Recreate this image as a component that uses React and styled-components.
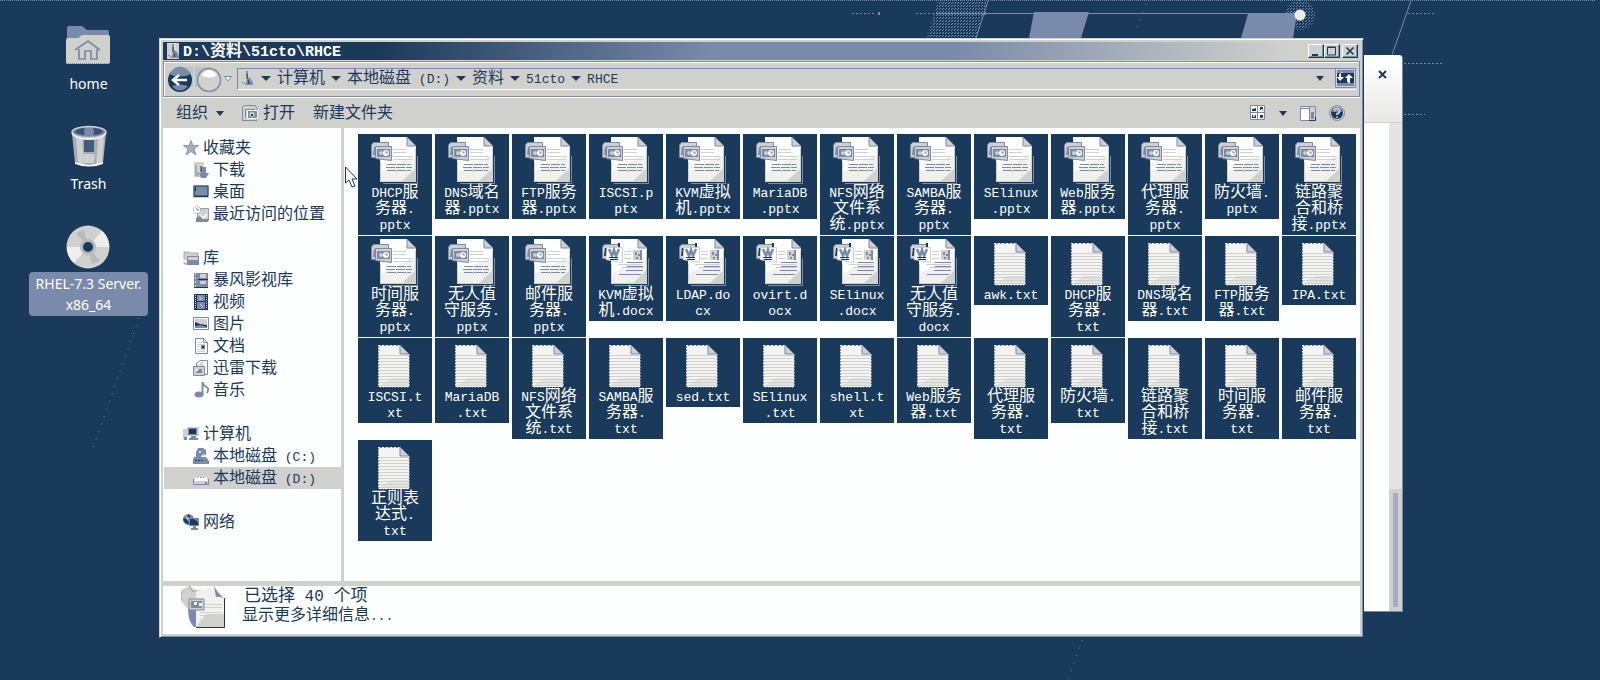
import React from "react";
import styled, { createGlobalStyle } from "styled-components";

const navy = "#1a3a5c";
const blue = "#7a8aaa";
const gray = "#d0d0cc";
const paper = "#fdfefe";

const GlobalStyle = createGlobalStyle`
  * { box-sizing: border-box; }
  body {
    margin: 0;
    background: ${navy};
    color: ${navy};
    font: 16px/16px "DejaVu Sans", "Noto Sans CJK SC", sans-serif;
  }
  button {
    margin: 0;
    padding: 0;
    border: 0;
    background: none;
    color: inherit;
    font: inherit;
    cursor: default;
  }
  a { color: inherit; text-decoration: none; }
  ul { list-style: none; margin: 0; padding: 0; }
  h1 { margin: 0; font-size: inherit; }
  svg { display: block; flex: none; }
`;

/* ---------- text ---------- */

const Latin = styled.span`
  font-family: "Liberation Mono", monospace;
  font-size: ${(p) => p.$size || 13}px;
  line-height: 0;
  white-space: pre;
`;

function Mixed({ text, size }) {
  return text
    .split(/([\x20-\x7e]+)/)
    .filter(Boolean)
    .map((run, i) =>
      /[\x20-\x7e]/.test(run) ? (
        <Latin key={i} $size={size}>{run}</Latin>
      ) : (
        <React.Fragment key={i}>{run}</React.Fragment>
      )
    );
}

/* ---------- desktop ---------- */

const Desktop = styled.div`
  position: relative;
  display: flex;
  align-items: flex-start;
  min-height: 100vh;
  overflow: hidden;
  background: ${navy};
`;

const WallpaperSvg = styled.svg`
  position: absolute;
  inset: 0;
  width: 100%;
  height: 100%;
`;

const Shortcuts = styled.div`
  position: relative;
  display: flex;
  flex-direction: column;
  align-items: center;
  gap: 27px;
  flex: none;
  width: 159px;
  padding: 22px 9px 0 27px;
`;

const Shortcut = styled.button`
  display: flex;
  flex-direction: column;
  align-items: center;
  gap: 2px;
  color: #fff;
  font: 14px/21px "Noto Sans", sans-serif;
`;

const ShortcutName = styled.span`
  padding: 1px 7px;
  border-radius: 4px;
  background: ${(p) => (p.$selected ? blue : "transparent")};
  white-space: pre;
`;

/* ---------- window behind ---------- */

const BackWindow = styled.section`
  position: absolute;
  top: 55px;
  right: 197px;
  display: flex;
  flex-direction: column;
  width: 140px;
  height: 557px;
  border-right: 1px solid ${blue};
  border-bottom: 1px solid ${blue};
  border-radius: 4px 4px 0 0;
  background: ${paper};
`;

const BackHeader = styled.header`
  display: flex;
  justify-content: flex-end;
  align-items: flex-start;
  height: 68px;
  padding: 15px 15px 0 0;
  border-bottom: 1px solid ${gray};
  border-radius: 4px 4px 0 0;
  background: linear-gradient(${paper} 10px, #e8e8e5);
`;

const BackBody = styled.div`
  display: flex;
  flex: 1;
  justify-content: flex-end;
`;

const BackScroll = styled.div`
  display: flex;
  align-items: flex-end;
  width: 13px;
  background: #e4e4e1;
`;

const BackThumb = styled.div`
  width: 13px;
  height: 122px;
  border: 4px solid ${gray};
  background: #a5adbb;
`;

/* ---------- explorer window ---------- */

const Window = styled.main`
  position: relative;
  flex: 1;
  min-width: 0;
  margin: 38px 236px 40px 0;
  padding: 3px;
  border: 1px solid;
  border-color: ${gray} ${navy} ${navy} ${gray};
  background: ${gray};
  box-shadow: inset 1px 1px 0 #fff, inset -1px -1px 0 ${blue};
`;

const TitleBar = styled.header`
  display: flex;
  align-items: center;
  gap: 3px;
  height: 18px;
  padding: 0 2px 0 3px;
  background: linear-gradient(90deg, ${navy} 18%, ${blue} 46%, ${blue} 66%, ${gray} 94%);
  color: #fff;
`;

const Title = styled.h1`
  flex: 1;
  font-weight: 700;
  line-height: 18px;
`;

const CaptionButtons = styled.div`
  display: flex;
`;

const CaptionButton = styled.button`
  display: grid;
  place-items: center;
  width: 16px;
  height: 14px;
  margin-left: ${(p) => (p.$apart ? 2 : 0)}px;
  border: 1px solid;
  border-color: #fff ${navy} ${navy} #fff;
  background: ${gray};
  box-shadow: inset -1px -1px 0 ${blue};
`;

const NavBar = styled.div`
  display: flex;
  align-items: center;
  gap: 2px;
  height: 36px;
  margin-top: 1px;
  padding: 0 2px 0 4px;
  border: 1px solid ${blue};
  box-shadow: inset 1px 1px 0 #fff, 0 1px 0 #fff;
`;

const AddressBar = styled.div`
  display: flex;
  flex: 1;
  align-items: center;
  gap: 6px;
  height: 22px;
  margin-left: 3px;
  padding: 0 0 2px 1px;
  border: 1px solid;
  border-color: ${blue} transparent #fff ${blue};
`;

const Crumb = styled.button`
  display: flex;
  align-items: center;
  white-space: nowrap;
`;

const HistoryArrow = styled.button`
  margin-left: auto;
  padding-right: 5px;
`;

const SvgButton = styled.button`
  display: flex;
`;

const Toolbar = styled.div`
  display: flex;
  align-items: center;
  gap: 18px;
  height: 30px;
  margin-top: 1px;
  padding: 0 15px 0 13px;
`;

const ToolButton = styled.button`
  display: flex;
  align-items: center;
  gap: ${(p) => (p.$menu ? 8 : 5)}px;
`;

const ToolViews = styled.div`
  display: flex;
  align-items: center;
  gap: 13px;
  margin-left: auto;
`;

const Content = styled.div`
  display: flex;
  min-height: 453px;
  background: ${paper};
`;

const Sidebar = styled.nav`
  display: flex;
  flex: none;
  flex-direction: column;
  gap: 22px;
  width: 181px;
  padding-top: 9px;
  border-right: 3px solid ${gray};
`;

const SideLink = styled.a`
  display: flex;
  align-items: center;
  gap: 4px;
  height: 22px;
  margin-left: 1px;
  padding-left: ${(p) => (p.$child ? 29 : 19)}px;
  background: ${(p) => (p.$current ? gray : "transparent")};
`;

const FileGrid = styled.ul`
  display: grid;
  flex: 1;
  grid-template-columns: repeat(auto-fill, 74px);
  align-content: start;
  align-items: start;
  gap: 1px 3px;
  padding: 6px 0 0 14px;
`;

const FileTile = styled.button`
  display: flex;
  flex-direction: column;
  align-items: center;
  width: 74px;
  padding: 2px 0 3px;
  background: ${navy};
  color: #fff;
`;

const FileLine = styled.span`
  display: block;
  height: 16px;
  white-space: nowrap;
`;

const Details = styled.footer`
  display: flex;
  gap: 15px;
  height: 53px;
  padding-left: 18px;
  border-top: 5px solid ${gray};
  background: ${paper};
`;

const DetailsText = styled.div`
  display: flex;
  flex-direction: column;
  line-height: 19px;
`;

const Count = styled.strong`
  padding-left: 2px;
  font-size: 17px;
  font-weight: 400;
`;

/* ---------- icons ---------- */

const Arrow = ({ size = 10 }) => (
  <svg width={size} height="5" viewBox="0 0 10 5" preserveAspectRatio="none">
    <path d="M0 0h10L5 5z" fill={navy} />
  </svg>
);

const FolderIcon = ({ w = 14, h = 16, flat }) => (
  <svg width={w} height={h} viewBox="0 0 14 16">
    <path d="M1 0h12v16H1z" fill={gray} />
    {!flat && <path d="M1 0h8v16" fill="none" stroke={paper} strokeWidth=".6" />}
    <path d="M6 1h2v6l3 2 2 4v2H5l2-5z" fill={blue} />
    <path d="M7 4v5M8 10l1 4" stroke={navy} />
    <path d="M2 12l3 2" stroke={blue} />
  </svg>
);

const HomeFolder = () => (
  <svg width="44" height="48" viewBox="0 0 44 48">
    <path d="M1 16V6q0-2 2-2h13l5 4h20q2 0 2 2v6z" fill={blue} />
    <path d="M0 18q0-2 2-2h10l4-3h26q2 0 2 2v25q0 2-2 2H2q-2 0-2-2z" fill={gray} />
    <path d="M0 41.500h44" stroke={blue} strokeDasharray="1 1" />
    <path d="M9 28l13-9 12 9M13 27v10h6v-8h6v8h6V27" fill="none" stroke={blue} strokeWidth="1.700" />
  </svg>
);

const TrashIcon = () => (
  <svg width="44" height="48" viewBox="0 0 44 48">
    <path d="M5 12l3 29q14 6 28 0l3-29z" fill="#a5adbb" />
    <path d="M9 15l2 26q4 2 6 2l-2-27zM29 43q4-1 6-2l2-26-6 1z" fill={gray} />
    <path d="M17 18h10v12H17z" fill={navy} opacity=".7" />
    <path d="M16 32h12l-1 9H17z" fill={gray} />
    <path d="M8 40q14 6 28 0v2q-14 5-28 0z" fill="#fff" />
    <ellipse cx="22" cy="10" rx="17" ry="5.500" fill={blue} stroke={gray} strokeWidth="1.500" />
    <path d="M8 10q3-4 10-4-2 4 0 7-7 0-10-3zM26 6q8 0 10 4-3 3-10 3 2-3 0-7z" fill={navy} opacity=".7" />
    <path d="M5 11q3 6 17 6t17-6" fill="none" stroke="#fff" strokeWidth="1.500" />
  </svg>
);

const DiscIcon = () => (
  <svg width="44" height="48" viewBox="0 0 44 48">
    <circle cx="22" cy="25" r="21.500" fill={gray} />
    <path d="M22 25L36 9a21 21 0 0 1 7 16zM22 25L8 41a21 21 0 0 1-7-16z" fill="#eeeeeb" />
    <path d="M22 25L10 11l8-3zM22 25l12 14-8 3z" fill="#b5bac2" />
    <circle cx="22" cy="25" r="8" fill="#b5bac2" />
    <circle cx="22" cy="25" r="5" fill={navy} />
  </svg>
);

const OfficePage = () => (
  <>
    <path d="M46.500 20v27.500H12" fill="none" stroke={blue} />
    <path d="M9 1h27l9 9v36H9z" fill={paper} />
    <path d="M9 46V36l36-18v28z" fill="#f0f0ed" />
    <path d="M30 46l15-14v14z" fill={gray} />
    <path d="M36 1v9h9z" fill={gray} stroke={blue} />
    <path d="M9.500 26v19.500h35V12" fill="none" stroke={gray} />
  </>
);

const PptxIcon = () => (
  <svg width="48" height="48" viewBox="0 0 48 48">
    <OfficePage />
    <path d="M22 13.500h13M22 16.500h13M22 20.500h19M22 23.500h19" stroke={gray} />
    <path d="M16 28.500h24M15 31.500h26M16 34.500h24" stroke={blue} strokeDasharray="9 1" />
    <path d="M2.500 6.500h15v4h-11v11h-6V9z" fill={gray} stroke={blue} />
    <path d="M3 11h2v8H2z" fill={blue} />
    <path d="M4.500 10.500h16v14L4.500 22.500z" fill={gray} stroke={blue} />
    <path d="M6 13h13v8H6z" fill={blue} />
    <circle cx="10" cy="17" r="2" fill={gray} />
    <circle cx="15" cy="17" r="3" fill={paper} />
    <path d="M15 15v2h2" fill="none" stroke={blue} />
  </svg>
);

const DocxIcon = () => (
  <svg width="48" height="48" viewBox="0 0 48 48">
    <OfficePage />
    <path d="M22 13.500h7M22 16.500h7M22 20.500h7M16 26.500h24M20 29.500h21" stroke={gray} />
    <path d="M25 24.500h16M25 28.500h16M24 32.500h17M17 36.500h22" stroke={blue} />
    <path d="M31.500 12.500h8v9h-8z" fill={gray} stroke={gray} />
    <path d="M33 14h2v3h-2zM36 16h3v2h-3zM34 19h2v2h-2zM38 12h2v10h-2z" fill={blue} />
    <path d="M2.500 6.500h15v4h-11v10h-6V9z" fill={gray} stroke={blue} />
    <path d="M16 5h2v4h-2zM3 10h2v8H2z" fill={navy} />
    <path d="M5 9.500h15.500v15L4 21.500z" fill={paper} stroke={gray} />
    <path d="M7 11l3 7 2-6 2 6 3-7" fill="none" stroke={blue} strokeWidth="2.500" />
    <path d="M7 19.500h9M8 21.500h8" stroke={navy} />
  </svg>
);

const TxtIcon = () => (
  <svg width="48" height="48" viewBox="0 0 48 48">
    <path d="M7 5h22l9 9v33H7z" fill="#f4f4f2" />
    <path d="M38.500 14v33M7.500 6v41" stroke={blue} strokeDasharray="2 1" />
    <path d="M9 5.500h20" stroke={blue} strokeDasharray="2 2" />
    <path
      d="M8 15.500h30M8 18.500h30M8 21.500h30M8 24.500h30M8 27.500h30M8 30.500h30M8 33.500h30M8 36.500h30M8 39.500h30M8 42.500h30M8 45.500h30"
      stroke={gray}
    />
    <path d="M20 38h18v8H8z" fill={gray} opacity=".5" />
    <path d="M29 5v9h9z" fill={gray} stroke={blue} />
    <path d="M9 47.500h29" stroke={blue} strokeDasharray="1 2" />
  </svg>
);

const BackIcon = () => (
  <svg width="25" height="26" viewBox="0 0 25 26">
    <path d="M6 1h19v20H6z" fill="#bcc1c8" />
    <circle cx="12" cy="14" r="12" fill={navy} />
    <path d="M1 8Q12-7 23 8q-11 5-22 0z" fill={blue} />
    <path d="M4 20q8 9 16 0-8-3-16 0z" fill={blue} />
    <path d="M11 9l-6 5 6 5M5 14h14" fill="none" stroke="#fff" strokeWidth="2.500" />
  </svg>
);

const ForwardIcon = () => (
  <svg width="27" height="26" viewBox="0 0 27 26">
    <path d="M0 1h14v20H0z" fill="#bcc1c8" />
    <circle cx="14" cy="14" r="11.500" fill={gray} stroke={blue} strokeWidth="1.500" />
    <path d="M6 9q8-10 16 0-8 5-16 0z" fill="#fff" />
  </svg>
);

const RefreshIcon = () => (
  <svg width="21" height="20" viewBox="0 0 21 20">
    <path d="M.5.500h20v19H.5z" fill={gray} stroke={blue} />
    <path d="M2 2h17v16H2z" fill={navy} />
    <path d="M2 2h17v3H2zM2 15h17v3H2z" fill={blue} />
    <path d="M8 4H6v5h3l-4 4-3-4h2V6zM13 15h2v-5h3l-4-4-4 4h2v3z" fill="#fff" />
  </svg>
);

const OpenIcon = () => (
  <svg width="16" height="16" viewBox="0 0 16 16">
    <path d="M2 .5h11l2 3v12H.5V2z" fill={gray} stroke={blue} />
    <path d="M3.500 13V4.500H13" fill="none" stroke={blue} />
    <path d="M5.500 5.500h10v8h-10z" fill={blue} stroke="#fff" />
    <circle cx="10" cy="9.500" r="2.500" fill={gray} />
    <path d="M9 9h2v2H9z" fill={navy} />
  </svg>
);

const ViewsIcon = () => (
  <svg width="16" height="16" viewBox="0 0 16 16">
    <path d="M.5.500h14v14H.5z" fill="#fff" stroke={blue} />
    <path d="M7.500 1v14M1 7.500h14" stroke={blue} />
    <path d="M2 3h4v3H2zM10 2h3v3h-3zM2 10h4v3H2zM10 10h3v3h-3z" fill={navy} />
    <path d="M2 3h3v1H2zM11 4h3v2h-3zM3 10h2v2H3zM12 12h2v2h-2z" fill={gray} />
  </svg>
);

const PreviewIcon = () => (
  <svg width="16" height="15" viewBox="0 0 16 15">
    <path d="M.5.500h15v14H.5z" fill="#fff" stroke={blue} />
    <path d="M1 2.500h9" stroke={blue} />
    <path d="M10 1h5v13h-5z" fill={gray} />
    <path d="M9.500 1v13" stroke={blue} />
    <path d="M11 6h3v7h-3z" fill={blue} />
    <path d="M9 14.500h6.500V11" fill="none" stroke={navy} />
  </svg>
);

const HelpIcon = () => (
  <svg width="16" height="16" viewBox="0 0 16 16">
    <circle cx="8" cy="8" r="7.500" fill={gray} stroke={blue} />
    <circle cx="8" cy="8" r="6" fill={navy} />
    <path d="M3 7q1-5 5-5t5 5z" fill={blue} />
    <path d="M5.500 6q0-2.500 2.500-2.500T10.500 6 8 8.500v1.500M8 11.500v1.500" fill="none" stroke={gray} strokeWidth="1.700" />
  </svg>
);

const sideArt = {
  star: (
    <path d="M8 .5l2 5h5.500l-4.500 3.500 2 6-5-3.500-5 3.500 2-6L.5 5.500H6z" fill="#a5adbb" stroke={blue} strokeWidth=".8" />
  ),
  download: (
    <>
      <path d="M1 0h10v15H1z" fill={gray} />
      <path d="M3 3v11M5 10v5" stroke={blue} />
      <path d="M8 5h5v6h3l-3 5H8l-2-5h2z" fill={blue} />
      <path d="M8 4v6" stroke={navy} />
    </>
  ),
  desktop: (
    <>
      <path d="M0 1h16v13H0z" fill={gray} />
      <path d="M1 2h14v10H1z" fill={blue} stroke={navy} />
      <path d="M1 12.500h14M2.500 3v4" stroke={navy} />
    </>
  ),
  recent: (
    <>
      <path d="M4.500 2.500h11v12h-11z" fill={gray} stroke={blue} strokeWidth=".8" />
      <circle cx="4" cy="4" r="3.500" fill={paper} stroke={blue} strokeDasharray="1 1" />
      <path d="M4 2v2h2" fill="none" stroke={blue} />
      <path d="M7 8l3 3 4-4v3l-4 3-3-2z" fill={paper} />
      <path d="M3 12l4-2 3 3h5v3H3z" fill={blue} />
    </>
  ),
  library: (
    <>
      <path d="M1 2h5l1 1h8v11H1z" fill={gray} stroke={blue} strokeWidth=".6" />
      <path d="M4 6h12v9H4z" fill={blue} />
      <path d="M5 7h10v3H5z" fill={gray} />
      <path d="M0 9l5 3H0z" fill={paper} />
    </>
  ),
  media: (
    <>
      <path d="M1 1h14v14H1z" fill={blue} />
      <path d="M7 2h6v4H7zM7 9h6v3H7z" fill={gray} />
      <path d="M2.500 1v14" stroke={gray} strokeDasharray="2 2" />
      <path d="M1 15.500h14M5 7.500h10" stroke={navy} />
    </>
  ),
  video: (
    <>
      <path d="M1 0h14v16H1z" fill={navy} />
      <path d="M4 1h8v6H4zM4 8h8v7H4z" fill={blue} />
      <path d="M2.500 1v14M13.500 1v14" stroke={gray} strokeDasharray="1 1" />
      <path d="M7 2v4l3-2M7 10l3 3" stroke={gray} fill="none" />
    </>
  ),
  picture: (
    <>
      <path d="M.5 1.500h15v12H.5z" fill={paper} stroke={blue} />
      <path d="M2 3h12v9H2z" fill={gray} />
      <path d="M2 6l5 2 7 1v3H2z" fill={navy} />
      <path d="M2 10l6-1 6 2v1H2z" fill={blue} />
    </>
  ),
  document: (
    <>
      <path d="M2.500.500h8l4 4v11h-12z" fill={paper} stroke={blue} />
      <path d="M10.500.500v4h4" fill="none" stroke={blue} />
      <path d="M4 4.500h5M4 6.500h8M4 8.500h4M4 11.500h8M4 13.500h8" stroke={gray} />
      <path d="M8 7h4v4H8z" fill={blue} />
      <path d="M9 8h2v2H9z" fill={navy} />
    </>
  ),
  thunder: (
    <>
      <path d="M3.500 6V3l4-2.500h7v14h-4" fill={paper} stroke={blue} />
      <path d="M5 5l5-4v5z" fill={gray} />
      <path d="M.5 6.500h11v9H.5z" fill={gray} stroke={blue} />
      <path d="M3 9h6v4H3z" fill={blue} />
      <path d="M3 9h3l-3 3z" fill={paper} />
    </>
  ),
  music: (
    <>
      <ellipse cx="6" cy="12.500" rx="4.500" ry="3" fill={blue} />
      <path d="M9.500 12V0q1 4 4 5t.5 6" fill="none" stroke={blue} strokeWidth="1.800" />
    </>
  ),
  computer: (
    <>
      <path d="M0 3h4v10H0z" fill={gray} />
      <path d="M4 1h12v9H4z" fill={gray} />
      <path d="M5 2h9v7H5z" fill={blue} />
      <path d="M6 3h7v5H6z" fill={navy} />
      <path d="M8 10h5v2h2v2H6v-2h2zM1 11h3v3H1z" fill={blue} />
    </>
  ),
  systemDisk: (
    <>
      <path d="M5 0h5l3 2v5h-4L8 9H3V4z" fill={blue} />
      <path d="M6 3h2v2H6zM10 6h2v2h-2z" fill={gray} />
      <path d="M1 9h12l3 4v3H0v-4z" fill={blue} />
      <path d="M2 12.500h9" stroke={navy} strokeDasharray="2 1" />
    </>
  ),
  disk: (
    <>
      <path d="M3 7h10l2 4H1z" fill={paper} />
      <path d="M1 11h14v3H1z" fill={gray} />
      <path d="M.5 9v5.500h15V9" fill="none" stroke={blue} />
      <path d="M4 7.500h8" stroke={blue} strokeDasharray="1 2" />
      <path d="M12 13h2" stroke={navy} />
    </>
  ),
  network: (
    <>
      <circle cx="5.500" cy="5.500" r="5.500" fill={blue} />
      <path d="M0 5q3-2 4 1l3 4q-6 0-7-5zM5 0l3 3-4 1z" fill={navy} />
      <path d="M3 2l3 2-2 2z" fill={gray} />
      <path d="M6 4h10v8H6z" fill={blue} />
      <path d="M7 5h8v6H7z" fill={navy} />
      <path d="M11 5l4 3V5z" fill={blue} />
      <path d="M10 12h3v2h2v2H8v-2h2z" fill={blue} />
    </>
  ),
};

const SideIcon = ({ name }) => (
  <svg width="16" height="16" viewBox="0 0 16 16">{sideArt[name]}</svg>
);

const SelectionIcon = () => (
  <svg width="46" height="44" viewBox="0 0 46 44">
    <path d="M0 4L9 0l5 4h6v18H6l-6-7z" fill={gray} />
    <path d="M8 0l3 5h5M0 6v9" fill="none" stroke={blue} strokeDasharray="2 1" />
    <path d="M7 22h10v19h-4q-6-5-6-19z" fill={blue} />
    <path d="M20 5l13-5 11 12v29H15V5z" fill="#f1f1ee" />
    <path d="M15 41l10-13h19v13z" fill={gray} />
    <path d="M22 18.500h19M22 21.500h19M19 26.500h22M19 29.500h22M19 33.500h20" stroke={gray} />
    <path d="M33 0q4 8 10 12-6-2-8-1z" fill={blue} />
    <path d="M43.500 12v29.500H15" fill="none" stroke={navy} />
    <path d="M8 13h15v11H8z" fill={gray} stroke={blue} />
    <path d="M10 15h11v7H10z" fill={blue} />
    <path d="M13 16h3v3h-3zM18 17h3v3h-3z" fill={paper} />
  </svg>
);

const PointerSvg = styled.svg`
  position: absolute;
  left: 185px;
  top: 127px;
`;

const Pointer = () => (
  <PointerSvg width="14" height="22" viewBox="0 0 14 22">
    <path d="M.5 1v16l3.500-3 3 7 3-1-3-7h5z" fill="#fff" stroke={navy} />
  </PointerSvg>
);

const Wallpaper = () => (
  <WallpaperSvg viewBox="0 0 1600 680" preserveAspectRatio="xMidYMin slice" aria-hidden="true">
    <defs>
      <pattern id="dots" width="3" height="3" patternUnits="userSpaceOnUse">
        <path d="M0 0h1v1H0zM1 2h1v1H1z" fill={blue} />
      </pattern>
    </defs>
    <path d="M0 .5h1596" stroke={blue} strokeDasharray="1 1" />
    <path d="M938 1h50l-12 37h-49z" fill="url(#dots)" />
    <path d="M988 1l-12 37" stroke={blue} />
    <path d="M1034 12h55l-8 26h-52zM1248 14h49l-4 24h-52z" fill={blue} />
    <path d="M852 13.500h24M916 13.500h20M1408 13.500h27M1404 63.500h38M1404 114.500h21" stroke={blue} strokeDasharray="2 2" />
    <path d="M936 13.500h360" stroke={blue} />
    <path d="M878 12h2v3h-2zM984 12h2v3h-2z" fill={blue} />
    <circle cx="1300" cy="15" r="15" fill="url(#dots)" />
    <circle cx="1300" cy="15" r="5.500" fill="#ececea" />
    <path d="M1411 1l-19 54" stroke={blue} />
    <path d="M1146 4l-11 29M139 318L93 448M1082 640l-14 40" stroke={blue} strokeDasharray="1 7" />
  </WallpaperSvg>
);

/* ---------- data ---------- */

const sideGroups = [
  ["star", "收藏夹", [["download", "下载"], ["desktop", "桌面"], ["recent", "最近访问的位置"]]],
  ["library", "库", [
    ["media", "暴风影视库"],
    ["video", "视频"],
    ["picture", "图片"],
    ["document", "文档"],
    ["thunder", "迅雷下载"],
    ["music", "音乐"],
  ]],
  ["computer", "计算机", [["systemDisk", "本地磁盘 (C:)"], ["disk", "本地磁盘 (D:)", true]]],
  ["network", "网络", []],
];

const crumbs = ["计算机", "本地磁盘 (D:)", "资料", "51cto", "RHCE"];

/* "|" marks where a file name wraps onto its next line. */
const files = [
  "DHCP服|务器.|pptx", "DNS域名|器.pptx", "FTP服务|器.pptx", "ISCSI.p|ptx", "KVM虚拟|机.pptx",
  "MariaDB|.pptx", "NFS网络|文件系|统.pptx", "SAMBA服|务器.|pptx", "SElinux|.pptx", "Web服务|器.pptx",
  "代理服|务器.|pptx", "防火墙.|pptx", "链路聚|合和桥|接.pptx",
  "时间服|务器.|pptx", "无人值|守服务.|pptx", "邮件服|务器.|pptx", "KVM虚拟|机.docx", "LDAP.do|cx",
  "ovirt.d|ocx", "SElinux|.docx", "无人值|守服务.|docx", "awk.txt", "DHCP服|务器.|txt",
  "DNS域名|器.txt", "FTP服务|器.txt", "IPA.txt",
  "ISCSI.t|xt", "MariaDB|.txt", "NFS网络|文件系|统.txt", "SAMBA服|务器.|txt", "sed.txt",
  "SElinux|.txt", "shell.t|xt", "Web服务|器.txt", "代理服|务器.|txt", "防火墙.|txt",
  "链路聚|合和桥|接.txt", "时间服|务器.|txt", "邮件服|务器.|txt",
  "正则表|达式.|txt",
];

const fileIcons = { pptx: PptxIcon, docx: DocxIcon, txt: TxtIcon };

function File({ name }) {
  const Icon = fileIcons[name.replace(/\|/g, "").split(".").pop()];
  return (
    <li>
      <FileTile type="button">
        <Icon />
        {name.split("|").map((line) => (
          <FileLine key={line}><Mixed text={line} /></FileLine>
        ))}
      </FileTile>
    </li>
  );
}

export default function App() {
  return (
    <Desktop>
      <GlobalStyle />
      <Wallpaper />
      <Shortcuts>
        <Shortcut type="button">
          <HomeFolder />
          <ShortcutName>home</ShortcutName>
        </Shortcut>
        <Shortcut type="button">
          <TrashIcon />
          <ShortcutName>Trash</ShortcutName>
        </Shortcut>
        <Shortcut type="button">
          <DiscIcon />
          <ShortcutName $selected>{"RHEL-7.3 Server.\nx86_64"}</ShortcutName>
        </Shortcut>
      </Shortcuts>

      <BackWindow>
        <BackHeader>
          <SvgButton type="button" aria-label="Close">
            <svg width="9" height="9" viewBox="0 0 9 9">
              <path d="M1 1l7 7M8 1L1 8" stroke={navy} strokeWidth="2" />
            </svg>
          </SvgButton>
        </BackHeader>
        <BackBody>
          <BackScroll><BackThumb /></BackScroll>
        </BackBody>
      </BackWindow>

      <Window>
        <TitleBar>
          <FolderIcon />
          <Title><Mixed text="D:\资料\51cto\RHCE" size={15} /></Title>
          <CaptionButtons>
            <CaptionButton type="button" aria-label="最小化">
              <svg width="10" height="10" viewBox="0 0 10 10"><path d="M1 8h6v2H1z" fill={navy} /></svg>
            </CaptionButton>
            <CaptionButton type="button" aria-label="最大化">
              <svg width="10" height="10" viewBox="0 0 10 10">
                <path d="M.5 1h8v8h-8zM0 1.500h9" fill="none" stroke={navy} />
              </svg>
            </CaptionButton>
            <CaptionButton type="button" aria-label="关闭" $apart>
              <svg width="10" height="10" viewBox="0 0 10 10">
                <path d="M1.500 1.500l7 7M8.500 1.500l-7 7" stroke={navy} strokeWidth="1.600" />
              </svg>
            </CaptionButton>
          </CaptionButtons>
        </TitleBar>

        <NavBar>
          <SvgButton type="button" aria-label="后退"><BackIcon /></SvgButton>
          <SvgButton type="button" aria-label="前进"><ForwardIcon /></SvgButton>
          <SvgButton type="button" aria-label="历史">
            <svg width="8" height="6" viewBox="0 0 8 6"><path d="M.5.500h7L4 5z" fill="#fff" stroke={blue} /></svg>
          </SvgButton>
          <AddressBar>
            <FolderIcon w={16} h={16} flat />
            {crumbs.map((crumb) => (
              <React.Fragment key={crumb}>
                <Arrow />
                <Crumb type="button"><span><Mixed text={crumb} /></span></Crumb>
              </React.Fragment>
            ))}
            <HistoryArrow type="button" aria-label="以前的位置"><Arrow size={8} /></HistoryArrow>
            <SvgButton type="button" aria-label="刷新"><RefreshIcon /></SvgButton>
          </AddressBar>
        </NavBar>

        <Toolbar>
          <ToolButton type="button" $menu>组织<Arrow size={8} /></ToolButton>
          <ToolButton type="button"><OpenIcon />打开</ToolButton>
          <ToolButton type="button">新建文件夹</ToolButton>
          <ToolViews>
            <SvgButton type="button" aria-label="视图"><ViewsIcon /></SvgButton>
            <SvgButton type="button" aria-label="更多选项"><Arrow size={8} /></SvgButton>
            <SvgButton type="button" aria-label="预览窗格"><PreviewIcon /></SvgButton>
            <SvgButton type="button" aria-label="帮助"><HelpIcon /></SvgButton>
          </ToolViews>
        </Toolbar>

        <Content>
          <Sidebar>
            {sideGroups.map(([icon, label, children]) => (
              <div key={label}>
                <SideLink href="#"><SideIcon name={icon} />{label}</SideLink>
                {children.map(([childIcon, childLabel, current]) => (
                  <SideLink key={childLabel} href="#" $child $current={current}>
                    <SideIcon name={childIcon} />
                    <span><Mixed text={childLabel} /></span>
                  </SideLink>
                ))}
              </div>
            ))}
          </Sidebar>
          <FileGrid>
            {files.map((name) => <File key={name} name={name} />)}
          </FileGrid>
        </Content>

        <Details>
          <SelectionIcon />
          <DetailsText>
            <Count><Mixed text="已选择 40 个项" size={16} /></Count>
            <span><Mixed text="显示更多详细信息..." /></span>
          </DetailsText>
        </Details>
        <Pointer />
      </Window>
    </Desktop>
  );
}
